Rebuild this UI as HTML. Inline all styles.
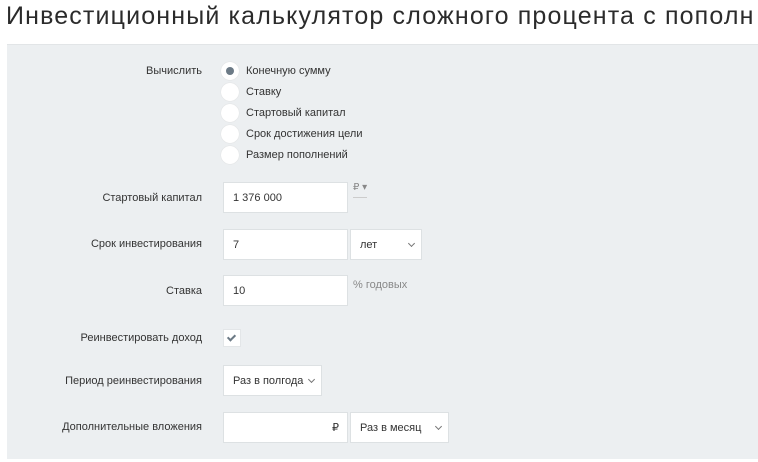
<!DOCTYPE html>
<html><head><meta charset="utf-8"><style>
*{box-sizing:border-box;margin:0;padding:0}
body{width:758px;height:462px;background:#fff;font-family:"Liberation Sans","DejaVu Sans",sans-serif;position:relative;overflow:hidden;color:#333}
.t{position:absolute;left:6px;top:2px;font-size:25px;color:#2b2b2b;white-space:nowrap;letter-spacing:1.15px}
.p{position:absolute;left:7px;top:44px;width:760px;height:415px;background:#eceff1;border-top:1px solid #e2e5e7}
.a{position:absolute;font-size:11px;color:#333;white-space:nowrap}
.l{right:556px;text-align:right}
.r{position:absolute;left:221px;width:18px;height:18px;border-radius:50%;background:#fff;box-shadow:0 0 1px #ccc}
.r.on::after{content:"";position:absolute;left:5px;top:5px;width:8px;height:8px;border-radius:50%;background:#6c7a86}
.b{position:absolute;background:#fff;border:1px solid #dde1e3;font-size:11px;padding-left:9px;display:flex;align-items:center;color:#333}
.c{position:absolute;right:7px;top:50%;margin-top:-4px;width:5px;height:5px;border-right:1px solid #777;border-bottom:1px solid #777;transform:rotate(45deg)}
</style></head><body>
<div class="t">Инвестиционный калькулятор сложного процента с пополн</div>
<div class="p"></div>
<div class="a l" style="top:65px">Вычислить</div>
<div class="r on" style="top:62px"></div><div class="a" style="left:246px;top:65px">Конечную сумму</div>
<div class="r" style="top:83px"></div><div class="a" style="left:246px;top:86px">Ставку</div>
<div class="r" style="top:104px"></div><div class="a" style="left:246px;top:107px">Стартовый капитал</div>
<div class="r" style="top:125px"></div><div class="a" style="left:246px;top:128px">Срок достижения цели</div>
<div class="r" style="top:146px"></div><div class="a" style="left:246px;top:149px">Размер пополнений</div>

<div class="a l" style="top:192px">Стартовый капитал</div>
<div class="b" style="left:223px;top:182px;width:125px;height:31px">1 376 000</div>
<div class="a" style="left:353px;top:182px;color:#888;font-size:10px">₽ ▾</div>
<div style="position:absolute;left:353px;top:197px;width:14px;height:1px;background:#ccc"></div>

<div class="a l" style="top:238px">Срок инвестирования</div>
<div class="b" style="left:223px;top:229px;width:125px;height:31px">7</div>
<div class="b" style="left:350px;top:229px;width:72px;height:31px">лет<span class="c"></span></div>

<div class="a l" style="top:285px">Ставка</div>
<div class="b" style="left:223px;top:275px;width:125px;height:31px">10</div>
<div class="a" style="left:353px;top:279px;color:#888">% годовых</div>

<div class="a l" style="top:332px">Реинвестировать доход</div>
<div style="position:absolute;left:223px;top:329px;width:18px;height:18px;background:#fff;border:1px solid #e3e6e8"><div style="position:absolute;left:5px;top:3px;width:5px;height:8px;border-right:2px solid #6c7a86;border-bottom:2px solid #6c7a86;transform:rotate(45deg)"></div></div>

<div class="a l" style="top:375px">Период реинвестирования</div>
<div class="b" style="left:223px;top:365px;width:99px;height:31px">Раз в полгода<span class="c"></span></div>

<div class="a l" style="top:421px">Дополнительные вложения</div>
<div class="b" style="left:223px;top:412px;width:125px;height:31px;justify-content:flex-end;padding-right:8px">₽</div>
<div class="b" style="left:350px;top:412px;width:99px;height:31px">Раз в месяц<span class="c"></span></div>
</body></html>
